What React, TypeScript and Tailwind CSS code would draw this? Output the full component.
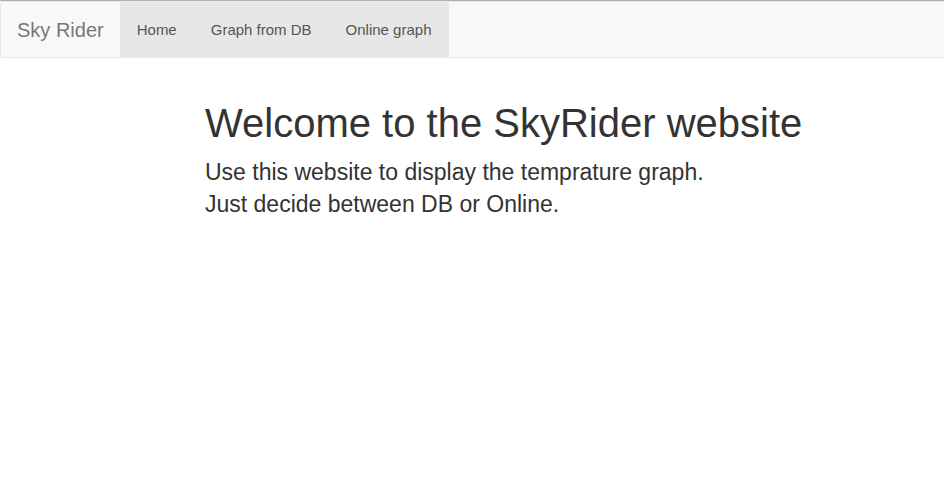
const links = ['Home', 'Graph from DB', 'Online graph'];

export default function App() {
  return (
    <div className="min-h-screen border-t border-[#b0b0b0] bg-white font-['Liberation_Sans',Arial,sans-serif] text-[#333]">
      <nav className="flex rounded-l border border-r-0 border-[#e7e7e7] bg-[#f8f8f8]">
        <a href="#" className="px-4 pt-[14px] pb-[13px] text-xl leading-7 text-[#777]">
          Sky Rider
        </a>
        <ul className="flex bg-[#e7e7e7]">
          {links.map((label) => (
            <li key={label}>
              <a
                href="#"
                className="block px-[17px] pt-[14px] pb-[13px] text-[15px] leading-7 text-[#555]"
              >
                {label}
              </a>
            </li>
          ))}
        </ul>
      </nav>
      <main className="px-[205px] pt-[42px]">
        <h1 className="text-[40px] leading-[46px] whitespace-nowrap">
          Welcome to the SkyRider website
        </h1>
        <p className="mt-[10px] text-[23px] leading-8">
          Use this website to display the temprature graph.
          <br />
          Just decide between DB or Online.
        </p>
      </main>
    </div>
  );
}
